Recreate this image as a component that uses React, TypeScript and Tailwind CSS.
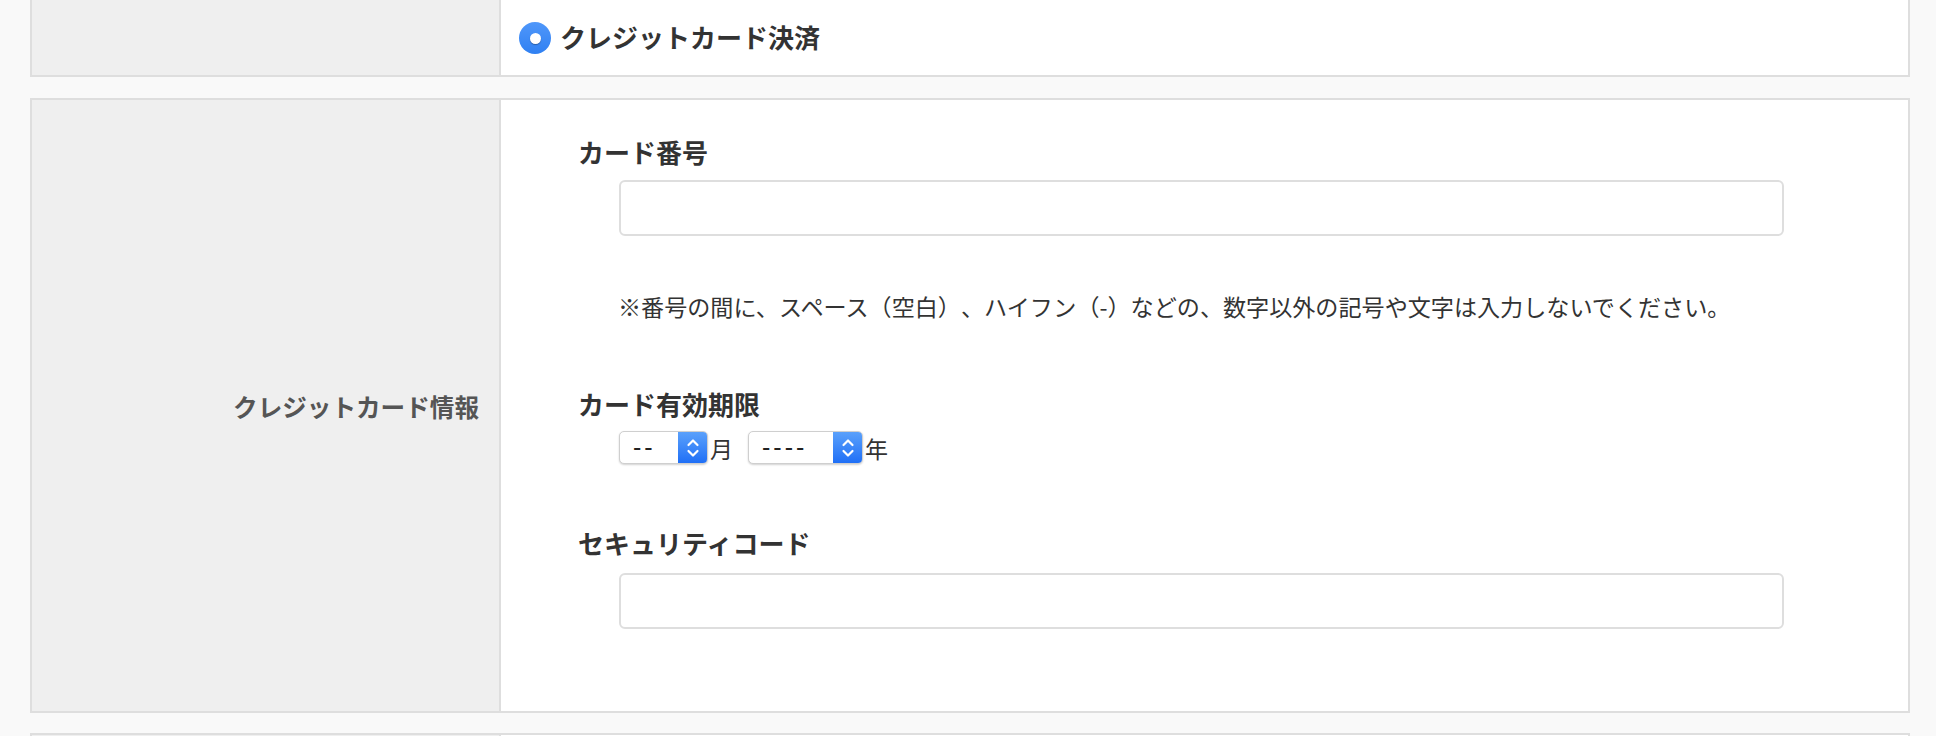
import React from "react";

const font = { fontFamily: '"Noto Sans CJK JP", "Noto Sans", sans-serif' };

function Chevrons() {
  return (
    <svg width="16" height="24" viewBox="0 0 16 24" fill="none">
      <path d="M3.5 9 L8 4.5 L12.5 9" stroke="white" strokeWidth="2.2" strokeLinecap="round" strokeLinejoin="round" />
      <path d="M3.5 15 L8 19.5 L12.5 15" stroke="white" strokeWidth="2.2" strokeLinecap="round" strokeLinejoin="round" />
    </svg>
  );
}

function FakeSelect({ value, width }: { value: string; width: string }) {
  return (
    <div
      className={`flex h-[33px] ${width} rounded-[5px] border border-[#cfcfcf] bg-white shadow-[0_1px_2px_rgba(0,0,0,0.18)] overflow-hidden`}
    >
      <div className="flex-1 flex items-center pl-[13px] text-[25px] text-[#222] tracking-[3px]" style={{ fontFamily: '"Liberation Sans", Arial, sans-serif' }}>{value}</div>
      <div className="w-[29px] h-full flex items-center justify-center bg-gradient-to-b from-[#5aa0fb] to-[#1f6ff6]">
        <Chevrons />
      </div>
    </div>
  );
}

export default function App() {
  return (
    <div className="min-h-[736px] h-[736px] overflow-hidden bg-[#f9f9f9] text-[#333] [text-spacing-trim:space-all]" style={font}>
      {/* Row 1: payment method */}
      <div className="ml-[30px] w-[1880px] h-[77px] flex border-x-2 border-b-2 border-[#dedede]">
        <div className="w-[469px] bg-[#efefef] border-r-2 border-[#dedede]" />
        <div className="flex-1 bg-white flex items-start pl-[18px] pt-[20px]">
          <div className="flex items-center gap-[9px]">
            <div className="w-[32px] h-[32px] rounded-full bg-gradient-to-b from-[#4f97fa] to-[#2f80f2] flex items-center justify-center mt-[2px]">
              <div className="w-[11px] h-[11px] rounded-full bg-white shadow-[0_1px_1px_rgba(0,0,0,0.3)]" />
            </div>
            <span className="text-[26px] leading-[32px] font-bold text-[#333]">クレジットカード決済</span>
          </div>
        </div>
      </div>

      {/* Row 2: credit card info */}
      <div className="ml-[30px] mt-[21px] w-[1880px] h-[615px] flex border-2 border-[#dedede]">
        <div className="w-[469px] bg-[#efefef] border-r-2 border-[#dedede] flex items-center justify-end pr-[20px]">
          <span className="text-[24.6px] leading-[32px] font-bold text-[#555]">クレジットカード情報</span>
        </div>
        <div className="flex-1 bg-white pl-[77px] pt-[34px] flex flex-col">
          <div className="text-[26px] leading-[36px] font-bold text-[#333]">カード番号</div>
          <div className="ml-[41px] mt-[10px] w-[1165px] h-[56px] rounded-[6px] border-2 border-[#dedede] bg-white" />
          <div className="ml-[40px] mt-[54px] text-[23.1px] leading-[32px] text-[#333] whitespace-nowrap">
            ※番号の間に、スペース（空白）、ハイフン（-）などの、数字以外の記号や文字は入力しないでください。
          </div>
          <div className="mt-[64px] text-[26px] leading-[36px] font-bold text-[#333]">カード有効期限</div>
          <div className="ml-[41px] mt-[9px] flex items-center">
            <FakeSelect value="--" width="w-[89px]" />
            <span className="ml-[2px] text-[23px] leading-[32px] text-[#333]">月</span>
            <div className="ml-[15px]">
              <FakeSelect value="----" width="w-[115px]" />
            </div>
            <span className="ml-[2px] text-[23px] leading-[32px] text-[#333]">年</span>
          </div>
          <div className="mt-[61px] text-[26px] leading-[36px] font-bold text-[#333]">セキュリティコード</div>
          <div className="ml-[41px] mt-[12px] w-[1165px] h-[56px] rounded-[6px] border-2 border-[#dedede] bg-white" />
        </div>
      </div>

      {/* Row 3: next table top */}
      <div className="ml-[30px] mt-[20px] w-[1880px] h-[40px] flex border-2 border-[#dedede]">
        <div className="w-[469px] bg-[#efefef] border-r-2 border-[#dedede]" />
        <div className="flex-1 bg-white" />
      </div>
    </div>
  );
}
